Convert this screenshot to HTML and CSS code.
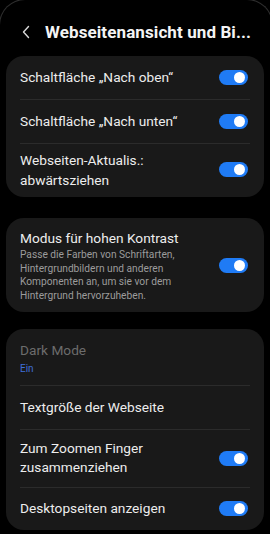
FILE: index.html
```html
<!DOCTYPE html>
<html lang="de">
<head>
<meta charset="utf-8">
<link rel="stylesheet" href="styles.css">
</head>
<body>
<div class="screen">
  <header class="bar">
    <svg class="back" width="10" height="14" viewBox="0 0 10 14"><path d="M7.5 1.5 L2.5 7 L7.5 12.5" fill="none" stroke="#d8d8d8" stroke-width="1.4" stroke-linecap="round" stroke-linejoin="round"/></svg>
    <h1 class="title">Webseitenansicht und Bi...</h1>
  </header>

  <section class="card c1">
    <div class="row"><span class="label">Schaltfläche „Nach oben“</span><span class="toggle"></span></div>
    <div class="row"><span class="label">Schaltfläche „Nach unten“</span><span class="toggle"></span></div>
    <div class="row tall"><span class="label lh20">Webseiten-Aktualis.:<br>abwärtsziehen</span><span class="toggle"></span></div>
  </section>

  <section class="card c2">
    <div class="row desc">
      <div class="texts">
        <span class="label">Modus für hohen Kontrast</span>
        <span class="sub">Passe die Farben von Schriftarten, Hintergrundbildern und anderen Komponenten an, um sie vor dem Hintergrund hervorzuheben.</span>
      </div>
      <span class="toggle"></span>
    </div>
  </section>

  <section class="card c3">
    <div class="row dm">
      <div class="texts">
        <span class="label dim">Dark Mode</span>
        <span class="state">Ein</span>
      </div>
    </div>
    <div class="row"><span class="label">Textgröße der Webseite</span></div>
    <div class="row tall2"><span class="label">Zum Zoomen Finger<br>zusammenziehen</span><span class="toggle"></span></div>
    <div class="row last"><span class="label">Desktopseiten anzeigen</span><span class="toggle"></span></div>
  </section>
</div>
</body>
</html>
```

FILE: styles.css
```css
* { box-sizing: border-box; margin: 0; padding: 0; }
html, body { background: #000; }
body {
  width: 270px;
  height: 534px;
  overflow: hidden;
  font-family: Roboto, "Noto Sans", sans-serif;
  color: #f1f1f1;
}
.screen {
  position: relative;
  display: flex;
  flex-direction: column;
  height: 534px;
  padding: 0 6px;
}
.screen::before {
  content: "";
  position: absolute;
  left: -1px;
  top: -1px;
  width: 272px;
  height: 535px;
  border: 1px solid #2e2e2e;
  border-bottom: none;
  border-radius: 26px 26px 0 0;
  pointer-events: none;
}
.bar {
  display: flex;
  align-items: center;
  height: 56px;
  padding: 8px 0 0 15px;
  gap: 14px;
}
.back { flex: none; }
.title {
  font-size: 17px;
  font-weight: 700;
  color: #f4f4f4;
  white-space: nowrap;
  letter-spacing: 0.1px;
}
.card {
  background: #191919;
  border-radius: 18px;
  padding: 0 14px;
  display: flex;
  flex-direction: column;
}
.c2 { margin-top: 21px; }
.c3 { margin-top: 17px; }
.row {
  display: flex;
  align-items: center;
  justify-content: space-between;
  min-height: 44px;
  border-top: 1px solid #2b2b2b;
}
.row:first-child { border-top: none; min-height: 43px; }
.row.tall { min-height: 54px; padding-bottom: 2px; }
.row.tall2 { min-height: 58px; }
.row.last { min-height: 43px; }
.row.desc { padding: 11px 0 9px; }
.row.dm { min-height: 56px; padding-top: 2px; }
.label {
  font-size: 13.7px;
  line-height: 19px;
  color: #ededed;
}
.label.lh20 { line-height: 20px; }
.label.dim { color: #6c6c6c; }
.texts { display: flex; flex-direction: column; }
.sub {
  font-size: 10.2px;
  line-height: 13.7px;
  color: #9c9c9c;
  width: 185px;
}
.state {
  font-size: 10px;
  line-height: 13px;
  color: #3f6fd8;
  margin-top: 2px;
}
.toggle {
  flex: none;
  position: relative;
  width: 29px;
  height: 15px;
  border-radius: 8px;
  background: #1f7bf5;
  margin-right: 2px;
}
.toggle::after {
  content: "";
  position: absolute;
  right: 3px;
  top: 2px;
  width: 11px;
  height: 11px;
  border-radius: 50%;
  background: #fff;
}
```
